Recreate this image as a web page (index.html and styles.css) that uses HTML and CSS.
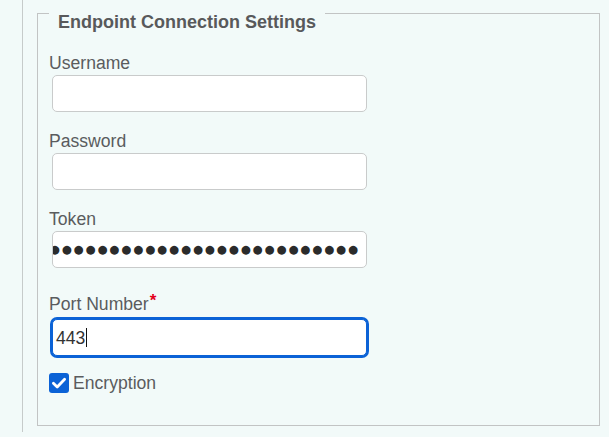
FILE: index.html
```html
<!DOCTYPE html>
<html lang="en">
<head>
<meta charset="utf-8">
<title>Endpoint Connection Settings</title>
<link rel="stylesheet" href="styles.css">
</head>
<body>
<div class="page">
  <fieldset class="box">
    <legend class="box-title">Endpoint Connection Settings</legend>
    <div class="field field-first">
      <label class="field-label" for="username">Username</label>
      <input class="field-input" id="username" type="text">
    </div>
    <div class="field">
      <label class="field-label" for="password">Password</label>
      <input class="field-input" id="password" type="password">
    </div>
    <div class="field">
      <label class="field-label">Token</label>
      <div class="field-input secret"><span class="dots">●●●●●●●●●●●●●●●●●●●●●●●●●●●●●●●●●●●●●●●●</span></div>
    </div>
    <div class="field field-required">
      <label class="field-label">Port Number<span class="req">*</span></label>
      <div class="field-input focused"><span class="value">443</span><span class="caret"></span></div>
    </div>
    <div class="check-row">
      <span class="check"><svg viewBox="0 0 20 20" width="20" height="20"><path d="M4.4 10.2 L8.2 14 L15.6 6.2" fill="none" stroke="#fff" stroke-width="2.8" stroke-linecap="round" stroke-linejoin="round"/></svg></span>
      <span class="check-label">Encryption</span>
    </div>
  </fieldset>
</div>
</body>
</html>
```
FILE: styles.css
```css
html, body {
  margin: 0;
  padding: 0;
  background: #f2faf9;
  font-family: "Liberation Sans", Arial, sans-serif;
  overflow: hidden;
}

.page {
  margin-left: 22px;
  border-left: 1px solid #c6cbca;
  height: 437px;
  padding: 0 9px 0 14px;
  box-sizing: border-box;
}

.box {
  margin: -5px 0 0 0;
  border: 1px solid #c2c4c4;
  padding: 0 11px 32px 11px;
  min-width: 0;
}

.box-title {
  padding: 18px 9px 0 9px;
  font-size: 18px;
  line-height: 18px;
  font-weight: bold;
  color: #58595b;
}

.field {
  display: flex;
  flex-direction: column;
  align-items: flex-start;
  margin-top: 20px;
}

.field-first {
  margin-top: 23px;
}

.field-required {
  margin-top: 27px;
}

.field-label {
  font-size: 17.6px;
  line-height: 18px;
  color: #5a5c5e;
}

.req {
  color: #e3001b;
  font-weight: bold;
  font-size: 17px;
  line-height: 0;
  position: relative;
  top: -4px;
  margin-left: 1px;
}

.field-input {
  box-sizing: border-box;
  width: 315px;
  height: 37px;
  margin: 3px 0 0 3px;
  border: 1px solid #c9cbcb;
  border-radius: 5px;
  background: #fff;
  font-family: "Liberation Sans", Arial, sans-serif;
  font-size: 17.6px;
  padding: 0 6px;
  outline: none;
}

.field-required .field-input {
  margin-top: 6px;
}

.secret {
  display: flex;
  justify-content: flex-end;
  align-items: center;
  overflow: hidden;
  white-space: nowrap;
  padding: 0 6px 0 4px;
}

.dots {
  font-family: "DejaVu Sans", sans-serif;
  font-size: 11.5px;
  letter-spacing: 1.9px;
  color: #2b2b2b;
  line-height: 1;
  flex-shrink: 0;
}

.focused {
  display: flex;
  align-items: center;
  border: 1px solid #0b62d6;
  box-shadow: 0 0 0 2px #0b62d6;
  border-radius: 5px;
  padding: 0 3px;
  color: #333;
}

.value {
  line-height: 18px;
}

.caret {
  width: 1px;
  height: 19px;
  background: #111;
  margin-left: 1px;
}

.check-row {
  display: flex;
  align-items: center;
  gap: 4px;
  margin-top: 17px;
}

.check {
  width: 20px;
  height: 20px;
  border-radius: 3px;
  background: #0b62d6;
  display: flex;
}

.check-label {
  font-size: 17.6px;
  line-height: 18px;
  color: #5a5c5e;
}
```
